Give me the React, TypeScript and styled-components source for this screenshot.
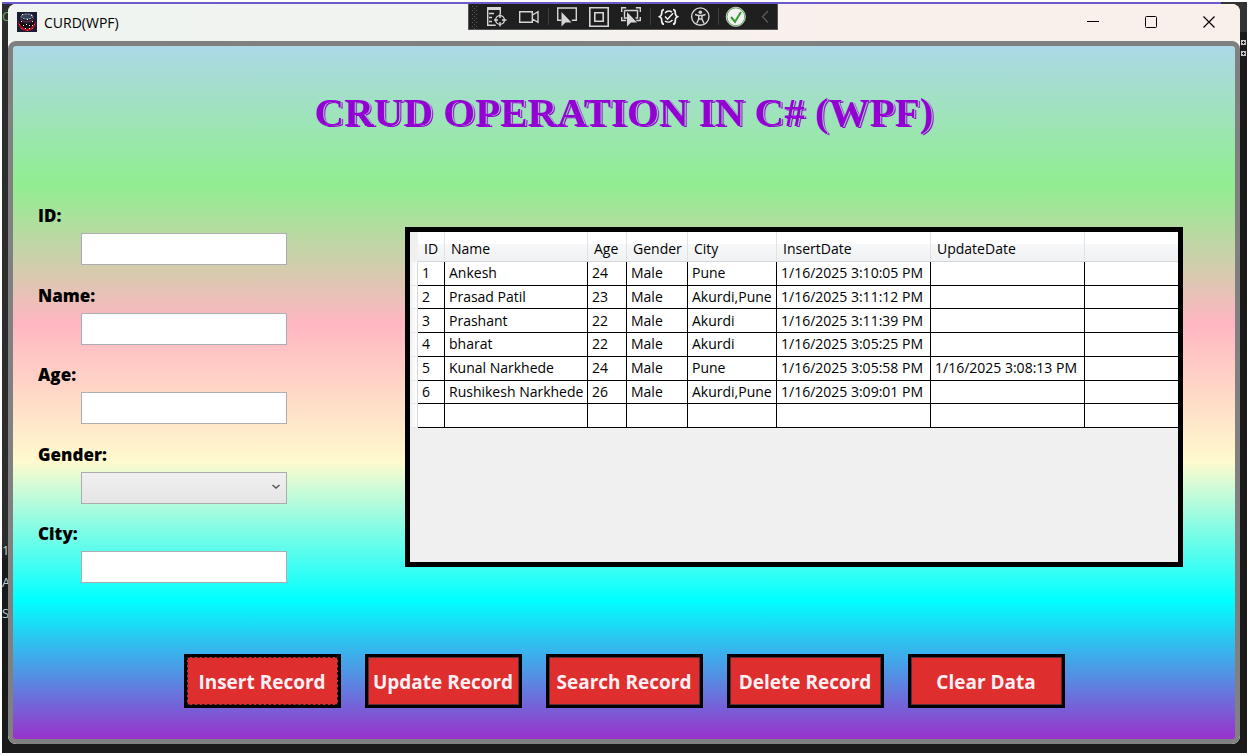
import React from "react";
import styled, { createGlobalStyle } from "styled-components";

const GlobalStyle = createGlobalStyle`
  *, *::before, *::after { box-sizing: border-box; }
  html, body, #root { height: 100%; }
  body {
    margin: 0;
    background: #fff;
    color: #000;
    font-family: "Open Sans", "Noto Sans", sans-serif;
  }
`;

const Page = styled.div`
  min-height: 100%;
  padding: 2px;
  display: flex;
`;

const Desktop = styled.div`
  position: relative;
  flex: 1;
  display: flex;
  padding: 2px 7px 9px 6px;
  overflow: hidden;
  background: linear-gradient(#333 0, #333 30px, #1a1a1a 30px, #1a1a1a 100%);
`;

const EditorEdge = styled.div`
  position: absolute;
  left: 0;
  top: 0;
  bottom: 0;
  width: 8px;
  background: linear-gradient(#2d2d2d 0, #2d2d2d 540px, #1a1a1a 560px);
  overflow: hidden;
`;

const EditorAccent = styled.div`
  position: absolute;
  left: 0;
  right: 26px;
  top: 0;
  height: 2px;
  background: #6a5acd;
`;

const EdgeText = styled.span<{ $top: number; $color?: string }>`
  position: absolute;
  left: 0;
  top: ${(p) => p.$top}px;
  font-size: 13px;
  line-height: 18px;
  color: ${(p) => p.$color ?? "#c8c8c8"};
`;

const EdgeMarks = styled.svg`
  position: absolute;
  right: 1px;
  top: 36px;
`;

const Window = styled.main`
  position: relative;
  flex: 1;
  min-width: 0;
  display: flex;
  flex-direction: column;
  border-radius: 8px;
  overflow: hidden;
  background: #fff;
`;

const TitleBar = styled.header`
  display: grid;
  grid-template-columns: 1fr auto 1fr;
  align-items: start;
  height: 37px;
  padding-right: 2px;
  background: linear-gradient(90deg, #eff4f0 0%, #f1f3f0 35%, #f9f0ec 66%, #f9f0ec 100%);
`;

const TitleLeft = styled.div`
  display: flex;
  align-items: center;
  gap: 7px;
  height: 36px;
  padding-left: 9px;
  font-size: 14px;
`;

const Caption = styled.div`
  display: flex;
  justify-content: flex-end;
  height: 36px;
`;

const CaptionButton = styled.button`
  width: 58px;
  border: 0;
  padding: 0;
  background: transparent;
  display: flex;
  align-items: center;
  justify-content: center;
`;

const DebugBar = styled.div`
  display: flex;
  align-items: center;
  width: 310px;
  height: 26px;
  border: 1px solid #555;
  border-top: 0;
  background: #1f1f1f;
`;

const Content = styled.section`
  flex: 1;
  display: flex;
  flex-direction: column;
  border: 5px solid #808080;
  border-radius: 8px;
  padding: 40px 25px 31px;
  background: linear-gradient(
    #add8e6 0%,
    #90ee90 20%,
    #ffb6c1 40%,
    #fffacd 60%,
    #00ffff 80%,
    #9932cc 100%
  );
  background-origin: padding-box;
`;

const Heading = styled.h1`
  margin: 0;
  text-align: center;
  font-family: "Liberation Serif", serif;
  font-weight: 700;
  font-size: 41px;
  line-height: 52px;
  color: #9400d3;
  text-shadow: 1px 0 0 #a0e2bf, 2px 1px 0 #9400d3;
`;

const Workspace = styled.div`
  display: flex;
  align-items: flex-start;
  margin-top: 66px;
`;

const Form = styled.form`
  flex: none;
  display: flex;
  flex-direction: column;
  justify-content: space-between;
  width: 249px;
  min-height: 379px;
`;

const Field = styled.div`
  display: flex;
  flex-direction: column;
  gap: 5px;
`;

const Label = styled.label`
  font-size: 17px;
  font-weight: 800;
  line-height: 24px;
`;

const TextInput = styled.input`
  height: 32px;
  margin: 0 0 0 43px;
  padding: 0 6px;
  border: 1px solid #abadb3;
  background: #fff;
  font: inherit;
  font-size: 14px;
`;

const SelectWrap = styled.div`
  position: relative;
  margin-left: 43px;
  height: 32px;
`;

const Select = styled.select`
  appearance: none;
  width: 100%;
  height: 100%;
  padding: 0 24px 0 6px;
  border: 1px solid #acacac;
  border-radius: 0;
  background: linear-gradient(#f0f0f0, #e5e5e5);
  font: inherit;
  font-size: 14px;
`;

const SelectArrow = styled.svg`
  position: absolute;
  right: 7px;
  top: 11px;
  pointer-events: none;
`;

const GridPanel = styled.div`
  flex: 1;
  min-width: 0;
  min-height: 340px;
  margin: 23px 27px 0 118px;
  border: 5px solid #000;
  background: #f0f0f0;
`;

const DataTable = styled.table`
  width: 100%;
  height: 196px;
  table-layout: fixed;
  border-collapse: separate;
  border-spacing: 0;
  font-size: 14px;
  line-height: 20px;
  white-space: nowrap;
`;

const HeadCell = styled.th`
  height: 30px;
  padding: 4px 0 0 6px;
  text-align: left;
  font-weight: 400;
  border-right: 1px solid #e0e2e5;
  border-bottom: 1px solid #d5d7da;
  background: linear-gradient(#fff 0%, #fff 40%, #f7f8fa 41%, #f0f1f3 100%);
  &:last-child { border-right: 0; }
`;

const Corner = styled.td`
  padding: 0;
  background: #f0f0f0;
`;

const BodyRow = styled.tr`
  height: 23px;
`;

const RowHead = styled.td`
  padding: 0;
  border-right: 1px solid #d5d7da;
  border-bottom: 1px solid #e4e6e9;
  background: linear-gradient(90deg, #f0f1f3, #fff);
`;

const Cell = styled.td`
  padding: 0 0 0 4px;
  border-right: 1px solid #000;
  border-bottom: 1px solid #000;
  background: #fff;
  &:last-child { border-right: 0; }
`;

const Actions = styled.div`
  display: flex;
  justify-content: center;
  gap: 24px;
  margin-top: auto;
`;

const ActionButton = styled.button<{ $focused?: boolean }>`
  width: 157px;
  height: 54px;
  padding: 2px 0 0;
  border: 3px solid #000;
  background: #df2e2e;
  outline: 1px ${(p) => (p.$focused ? "dashed #222" : "solid #5b2a3c")};
  outline-offset: -4px;
  color: #fff0f5;
  font-family: inherit;
  font-size: 19px;
  font-weight: 700;
  white-space: nowrap;
`;

const columns = [
  { title: "ID", width: 27 },
  { title: "Name", width: 143 },
  { title: "Age", width: 39 },
  { title: "Gender", width: 61 },
  { title: "City", width: 89 },
  { title: "InsertDate", width: 154 },
  { title: "UpdateDate", width: 154 },
];

const rows = [
  ["1", "Ankesh", "24", "Male", "Pune", "1/16/2025 3:10:05 PM", ""],
  ["2", "Prasad Patil", "23", "Male", "Akurdi,Pune", "1/16/2025 3:11:12 PM", ""],
  ["3", "Prashant", "22", "Male", "Akurdi", "1/16/2025 3:11:39 PM", ""],
  ["4", "bharat", "22", "Male", "Akurdi", "1/16/2025 3:05:25 PM", ""],
  ["5", "Kunal Narkhede", "24", "Male", "Pune", "1/16/2025 3:05:58 PM", "1/16/2025 3:08:13 PM"],
  ["6", "Rushikesh Narkhede", "26", "Male", "Akurdi,Pune", "1/16/2025 3:09:01 PM", ""],
  ["", "", "", "", "", "", ""],
];

const AppIcon = () => (
  <svg width="20" height="20" viewBox="0 0 20 20" aria-hidden="true">
    <rect width="20" height="20" fill="#1b1d33" />
    <path d="M1 9c0 6 4 10 9 10s9-4 9-10l-3 5-6 3-6-3z" fill="#b3101f" />
    <path d="M3 8l3 3 4 1 4-1 3-3v5l-4 3H7l-4-3z" fill="#180a12" />
    <ellipse cx="10" cy="4.5" rx="6" ry="2.5" fill="#33415c" stroke="#a9b4c6" strokeWidth="1" strokeDasharray="2 1" />
    <path d="M3 6l3 3 4 1 4-1 3-3" fill="none" stroke="#7d3040" />
    <g fill="#fff">
      <path d="M5 2h1v1H5zM14 3h1v1h-1zM4 9h1v1H4zM10 7h1v1h-1zM15 9h1v1h-1z" />
      <path d="M6 13h1v1H6zM9 12h1v1H9zM12 13h1v1h-1zM15 13h1v1h-1zM8 16h1v1H8zM12 16h1v1h-1z" />
    </g>
    <path d="M2 12h1v1H2zM17 12h1v1h-1zM4 16h1v1H4zM10 18h1v1h-1zM15 16h1v1h-1z" fill="#ff4a55" />
  </svg>
);

const DebugIcons = () => (
  <svg width="308" height="25" viewBox="469 4 308 25" role="img" aria-label="Debug tools">
    <g fill="#5a5a5a">
      {[6, 10, 14, 18, 22, 26].map((y) => (
        <path key={y} d={`M472 ${y}h1v1h-1zM476 ${y}h1v1h-1zM474 ${y + 2}h1v1h-1z`} />
      ))}
    </g>
    <path d="M548.5 8v17M650.5 8v17M718.5 8v17" stroke="#3d3d3d" />
    <g fill="none" stroke="#d6d6d6" strokeWidth="1.4">
      <path d="M487 8.5h14" strokeWidth="3" />
      <path d="M487.7 8v17.3h8M500.3 8v6M489 13.5h5M489 17.5h3M489 21.5h3" />
      <circle cx="500" cy="20" r="4.4" />
      <path d="M500 14v4M500 22v4.500M494 20h4M502 20h4.500" />
      <path d="M519.700 11.700h12.600v10.600h-12.600zM532.500 15l5.500-3.300v10.600l-5.500-3.300" />
      <path d="M561.500 20.300h-3.800V8h18.600v12.300h-4.500" />
      <path d="M589.800 7.800h18.400v18.400h-18.400zM594.800 12.800h8.400v8.400h-8.400z" strokeWidth="1.600" />
      <path d="M621.700 12V7.700h4.500M635.800 7.700h4.500V12M621.700 17v3.500h4.500M640.300 17v3.500h-4M624.500 10.500h13v7.500h-2M628 18h-3.500v-7.500" />
      <circle cx="700.300" cy="16.600" r="8.700" />
      <path d="M695 14.500l3.500 1h3.600l3.500-1M698.700 15.500v3.500l-2 4.500M702 15.500v3.500l2 4.500M698.700 19h3.300" />
    </g>
    <g fill="#d6d6d6">
      <path d="M561.500 12v14.500l4-4h6z" />
      <path d="M627 12v14.500l4-4h6z" />
      <circle cx="700.300" cy="12.300" r="1.800" />
    </g>
    <g fill="none" stroke="#f0f0f0" strokeWidth="1.700">
      <path d="M664 9.700c-3 0-2 2.500-2.400 4.500-.2 1.300-1 2-2 2.500 1 .5 1.800 1.200 2 2.500.4 2-.6 5 2.400 5M673 9.700c3 0 2 2.500 2.400 4.500.2 1.300 1 2 2 2.500-1 .5-1.800 1.200-2 2.500-.4 2 .6 5-2.400 5" />
      <path d="M665 13a5.500 5.500 0 0 1 7-1M665 21a5.500 5.500 0 0 0 7.500-1M665 16.500l2.600 2.700 5.400-6" strokeWidth="1.500" />
    </g>
    <circle cx="735.800" cy="16.800" r="9" fill="#f1f1f1" stroke="#3aa53a" strokeWidth="1" />
    <circle cx="735.800" cy="16.800" r="9.600" fill="none" stroke="#f1f1f1" strokeWidth="0.800" />
    <path d="M731 17l4 4.700 6-9.700" fill="none" stroke="#2f9e2f" strokeWidth="2" />
    <path d="M768 11l-5.500 5.700 5.500 5.800" fill="none" stroke="#5a5a5a" strokeWidth="1.300" />
  </svg>
);

function TextField({ id, label }: { id: string; label: string }) {
  return (
    <Field>
      <Label htmlFor={id}>{label}</Label>
      <TextInput id={id} type="text" />
    </Field>
  );
}

export default function App() {
  return (
    <Page>
      <GlobalStyle />
      <Desktop>
        <EditorEdge aria-hidden="true">
          <EdgeText $top={5} $color="#5fae5f">C</EdgeText>
          <EdgeText $top={539}>1</EdgeText>
          <EdgeText $top={571}>A</EdgeText>
          <EdgeText $top={602}>S</EdgeText>
        </EditorEdge>
        <EdgeMarks width="5" height="20" viewBox="0 0 5 20" aria-hidden="true">
          <path d="M0 2h5v5H0zM0 13h5v5H0z" fill="#c8c8c8" />
          <path d="M1 4h3v1H1zM2 3h1v3H2zM1 15h3v1H1zM2 14h1v3H2z" fill="#1a1a1a" />
        </EdgeMarks>
        <EditorAccent />
        <Window>
          <TitleBar>
            <TitleLeft>
              <AppIcon />
              <span>CURD(WPF)</span>
            </TitleLeft>
            <DebugBar>
              <DebugIcons />
            </DebugBar>
            <Caption>
              <CaptionButton type="button" aria-label="Minimize">
                <svg width="12" height="12"><path d="M0 5.500h12" stroke="#000" /></svg>
              </CaptionButton>
              <CaptionButton type="button" aria-label="Maximize">
                <svg width="12" height="12"><rect x="0.500" y="0.500" width="11" height="11" rx="1" fill="none" stroke="#000" /></svg>
              </CaptionButton>
              <CaptionButton type="button" aria-label="Close">
                <svg width="12" height="12"><path d="M0.500 0.500l11 11M11.500 0.500l-11 11" stroke="#000" strokeWidth="1.200" /></svg>
              </CaptionButton>
            </Caption>
          </TitleBar>
          <Content>
            <Heading>CRUD OPERATION IN C# (WPF)</Heading>
            <Workspace>
              <Form>
                <TextField id="record-id" label="ID:" />
                <TextField id="record-name" label="Name:" />
                <TextField id="record-age" label="Age:" />
                <Field>
                  <Label htmlFor="record-gender">Gender:</Label>
                  <SelectWrap>
                    <Select id="record-gender" defaultValue="">
                      <option value="" />
                    </Select>
                    <SelectArrow width="8" height="8" viewBox="0 0 8 8" aria-hidden="true">
                      <path d="M0.500 2l3.500 3 3.500-3" fill="none" stroke="#555" strokeWidth="1.500" />
                    </SelectArrow>
                  </SelectWrap>
                </Field>
                <TextField id="record-city" label="City:" />
              </Form>
              <GridPanel>
                <DataTable>
                  <colgroup>
                    <col width={8} />
                    {columns.map((c) => (
                      <col key={c.title} width={c.width} />
                    ))}
                    <col />
                  </colgroup>
                  <thead>
                    <tr>
                      <Corner />
                      {columns.map((c) => (
                        <HeadCell key={c.title} scope="col">{c.title}</HeadCell>
                      ))}
                      <HeadCell as="td" />
                    </tr>
                  </thead>
                  <tbody>
                    {rows.map((row, i) => (
                      <BodyRow key={i}>
                        <RowHead />
                        {row.map((value, j) => (
                          <Cell key={j}>{value}</Cell>
                        ))}
                        <Cell />
                      </BodyRow>
                    ))}
                  </tbody>
                </DataTable>
              </GridPanel>
            </Workspace>
            <Actions>
              <ActionButton type="button" $focused>Insert Record</ActionButton>
              <ActionButton type="button">Update Record</ActionButton>
              <ActionButton type="button">Search Record</ActionButton>
              <ActionButton type="button">Delete Record</ActionButton>
              <ActionButton type="button">Clear Data</ActionButton>
            </Actions>
          </Content>
        </Window>
      </Desktop>
    </Page>
  );
}
